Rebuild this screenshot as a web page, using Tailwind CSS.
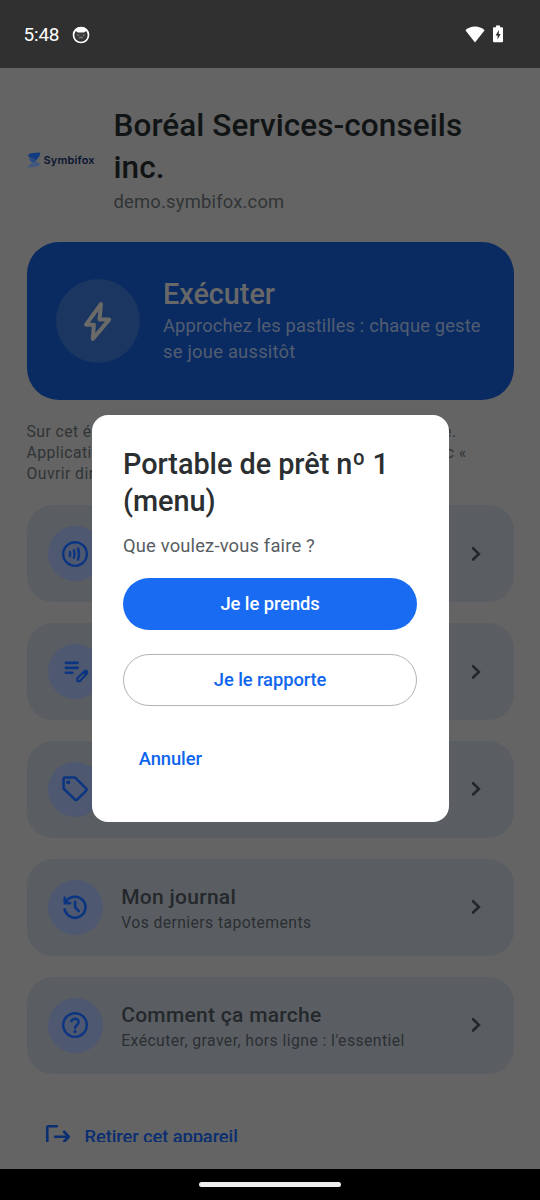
<!DOCTYPE html>
<html lang="fr">
<head>
<meta charset="utf-8">
<title>Symbifox</title>
<script src="https://cdn.jsdelivr.net/npm/@tailwindcss/browser@4"></script>
</head>
<body class="w-[540px] h-[1200px] overflow-hidden relative bg-[#646464] font-[Roboto,sans-serif] flex flex-col">
<header class="h-[68px] shrink-0 bg-[#303030] flex items-center text-white pl-[23.500px] pr-9">
  <span class="text-[19px] leading-6 tracking-[-0.200px] mt-[2px]">5:48</span>
  <svg class="ml-[13px] mt-px" width="18" height="18" viewBox="0 0 18 18"><circle cx="9" cy="9" r="7.5" fill="none" stroke="#fff" stroke-width="1.700"/><path d="M1.800 6.200Q4 1 9 1t7.200 5.200l-2.400-1-1.400 1.300H5.600L4.200 5.200z" fill="#fff"/><path d="M3.600 5.400l2.400 1.600h6l2.400-1.600v5.300Q13 14 9 14t-5.400-3.500z" fill="#3c3c3c"/><path d="M5.200 8.900l2 .6M12.800 8.900l-2 .6M7 12l2-1 2 1" stroke="#999" stroke-width=".8" fill="none"/></svg>
  <svg class="ml-auto" width="20" height="17" viewBox="0 0 20 17"><path d="M.4 4.200Q4.500 .6 10 .6t9.600 3.600L10 16.400z" fill="#fff"/></svg>
  <svg class="ml-[7px] -mt-px" width="12" height="18" viewBox="0 0 12 18"><path d="M4 .5h4v1.700h2q1 0 1 1v13q0 1-1 1H2q-1 0-1-1v-13q0-1 1-1h2z" fill="#fff"/><path d="M6.800 5L3.600 10.400h2V14.500L8.600 9h-1.800z" fill="#303030"/></svg>
</header>

<main class="flex flex-col px-[26.500px] pt-[37.300px] h-[1074px] shrink-0 overflow-hidden">
  <section class="flex items-center gap-[18px]">
    <div class="w-[69px] flex items-center gap-[3px]">
      <svg width="14" height="17" viewBox="0 0 14 17"><path d="M13.300 .5Q4 .6 1.800 2.200.2 5 3.600 5.800q3.500.6 5.200 2.600Q12.900 5 13.300.5z" fill="#123b80"/><path d="M1.800 6.200q6 .4 7.400 3.300L6 10.400Q2.400 9 1.800 6.200z" fill="#234a86"/><path d="M.3 16.200Q3 11.200 8 9.400q4 .6 5.200 3-1.200 2.200-5 2.300-4.200-.2-7.900 1.500z" fill="#41587f"/></svg>
      <span class="text-[11px] leading-4 font-semibold font-[Inter,sans-serif] tracking-[0.160px] text-[#0a1430] -mt-px">Symbifox</span>
    </div>
    <div>
      <h1 class="text-[31.500px] leading-[42px] tracking-[0.080px] font-medium text-[#111414]">Boréal Services-conseils<br>inc.</h1>
      <p class="text-[18.375px] leading-[26.250px] tracking-[0.210px] text-[#303436]">demo.symbifox.com</p>
    </div>
  </section>

  <section class="mt-[26.200px] h-[158px] shrink-0 rounded-[32px] bg-[#0a2b62] flex items-center pl-[29px] gap-[23.500px]">
    <div class="size-[84px] shrink-0 rounded-full bg-[#1b3661] flex items-center justify-center">
      <svg width="84" height="84" viewBox="0 0 84 84" fill="none" stroke="#6a6a68" stroke-width="4" stroke-linejoin="round"><path d="M45 25L30 45.700H37.900L36.800 60L53.200 40.600H43.500z"/></svg>
    </div>
    <div class="pt-[0.600px]">
      <h2 class="text-[28.875px] leading-[36.750px] tracking-[-0.050px] font-medium text-[#686868]">Exécuter</h2>
      <p class="text-[18.375px] leading-[26.250px] tracking-[0.145px] text-[#525d70]">Approchez les pastilles : chaque geste<br><span class="tracking-[0.230px]">se joue aussitôt</span></p>
    </div>
  </section>

  <section class="mt-[21px] text-[15.750px] leading-[21px] tracking-[0.430px] text-[#303436]">
    <div class="flex justify-between w-[430px]"><span>Sur cet écran</span><span>allumée.</span></div>
    <div class="flex justify-between w-[440px]"><span>Application</span><span>avec «</span></div>
    <div>Ouvrir directement ».</div>
  </section>

  <section class="mt-[21.200px] flex flex-col gap-[21.300px]">
    <div class="h-[96.700px] shrink-0 rounded-[26px] bg-[#5a5e63] flex items-center justify-between px-[21px]">
      <div class="size-[55px] rounded-full bg-[#4e5870] flex items-center justify-center">
        <svg width="31.500" height="31.500" viewBox="0 0 24 24" fill="none" stroke="#0b3580" stroke-width="1.800" stroke-linecap="round"><circle cx="12.200" cy="12.200" r="9"/><path d="M8.300 10.600q.4 1.600 0 3.200M11.400 9.400q.9 2.800 0 5.600M14.500 8q1.500 4.200 0 8.400"/></svg>
      </div>
      <svg width="31.500" height="31.500" viewBox="0 0 24 24" fill="none" stroke="#24282b" stroke-width="2" stroke-linecap="round"><path d="M9.200 7.800L13.600 12.100L9.200 16.400"/></svg>
    </div>
    <div class="h-[96.700px] shrink-0 rounded-[26px] bg-[#5a5e63] flex items-center justify-between px-[21px]">
      <div class="size-[55px] rounded-full bg-[#4e5870] flex items-center justify-center">
        <svg width="31.500" height="31.500" viewBox="0 0 24 24" fill="none" stroke="#0b3580" stroke-width="2" stroke-linecap="round"><path d="M5.200 5.200h9M5.200 9h9M5.200 12.800h5"/><path d="M14 19.200v-2.200l5.500-5.500q.9-.7 1.700.1.800.8.100 1.700l-5.500 5.900z" stroke-width="1.600" stroke-linejoin="round"/><path d="M18 13l1.700 1.700 1.800-1.700-1.800-1.700z" fill="#0b3580" stroke="none"/></svg>
      </div>
      <svg width="31.500" height="31.500" viewBox="0 0 24 24" fill="none" stroke="#24282b" stroke-width="2" stroke-linecap="round"><path d="M9.200 7.800L13.600 12.100L9.200 16.400"/></svg>
    </div>
    <div class="h-[96.700px] shrink-0 rounded-[26px] bg-[#5a5e63] flex items-center justify-between px-[21px]">
      <div class="size-[55px] rounded-full bg-[#4e5870] flex items-center justify-center">
        <svg width="31.500" height="31.500" viewBox="0 0 24 24" fill="none" stroke="#0b3580" stroke-width="1.900" stroke-linejoin="round"><path d="M3.500 4.400q0-1 1-1h7.200q.5 0 .8.300l8.400 8.400q.6.600 0 1.200L13.700 20.500q-.6.600-1.200 0L3.800 12.200Q3.500 11.900 3.500 11.400z"/><circle cx="7" cy="7" r="1.500" fill="#0b3580" stroke="none"/></svg>
      </div>
      <svg width="31.500" height="31.500" viewBox="0 0 24 24" fill="none" stroke="#24282b" stroke-width="2" stroke-linecap="round"><path d="M9.200 7.800L13.600 12.100L9.200 16.400"/></svg>
    </div>
    <div class="h-[96.700px] shrink-0 rounded-[26px] bg-[#5a5e63] flex items-center px-[21px]">
      <div class="size-[55px] rounded-full bg-[#4e5870] flex items-center justify-center">
        <svg width="31.500" height="31.500" viewBox="0 0 24 24" fill="none" stroke="#0b3580" stroke-width="2" stroke-linecap="round" stroke-linejoin="round"><path d="M4.300 13.900A8 8 0 1 0 5.400 8.100M4.400 5.100V9.200H8.500"/><path d="M12.300 8.200v4.300l2.800 2.800"/></svg>
      </div>
      <div class="ml-[18.700px] pt-[1px] grow">
        <h3 class="text-[21px] leading-[31.500px] tracking-[0.280px] font-medium text-[#24282b]">Mon journal</h3>
        <p class="-mt-px text-[15.750px] leading-[21px] tracking-[0.400px] text-[#2b2f32]">Vos derniers tapotements</p>
      </div>
      <svg width="31.500" height="31.500" viewBox="0 0 24 24" fill="none" stroke="#24282b" stroke-width="2" stroke-linecap="round"><path d="M9.200 7.800L13.600 12.100L9.200 16.400"/></svg>
    </div>
    <div class="h-[96.700px] shrink-0 rounded-[26px] bg-[#5a5e63] flex items-center px-[21px]">
      <div class="size-[55px] rounded-full bg-[#4e5870] flex items-center justify-center">
        <svg width="31.500" height="31.500" viewBox="0 0 24 24" fill="none" stroke="#0b3580" stroke-width="1.800" stroke-linecap="round"><circle cx="12.200" cy="12.200" r="9"/><path d="M9.500 9.300Q10.200 7.400 12.300 7.400q2.600.1 2.700 2.400 0 1.200-1.400 2.400-1.300 1.100-1.300 2.200"/><circle cx="12.200" cy="17.200" r="1.200" fill="#0b3580" stroke="none"/></svg>
      </div>
      <div class="ml-[18.700px] pt-[1px] grow">
        <h3 class="text-[21px] leading-[31.500px] tracking-[0.280px] font-medium text-[#24282b]">Comment ça marche</h3>
        <p class="-mt-px text-[15.750px] leading-[21px] tracking-[0.430px] text-[#2b2f32]">Exécuter, graver, hors ligne : l'essentiel</p>
      </div>
      <svg width="31.500" height="31.500" viewBox="0 0 24 24" fill="none" stroke="#24282b" stroke-width="2" stroke-linecap="round"><path d="M9.200 7.800L13.600 12.100L9.200 16.400"/></svg>
    </div>
  </section>

  <div class="mt-[47.500px] ml-[15.500px] flex items-center gap-[11px] text-[#0b2f70] shrink-0">
    <svg width="31.500" height="31.500" viewBox="0 0 24 24" fill="none" stroke="#0b2f70" stroke-width="2" stroke-linecap="round" stroke-linejoin="round"><path d="M11.300 4H5q-1 0-1 1v14q0 1 1 1h6.300M10 12h10M16.800 8.200L20.400 12L16.800 15.800"/></svg>
    <span class="text-[18.375px] leading-[26px] tracking-[-0.110px] font-medium">Retirer cet appareil</span>
  </div>
</main>

<footer class="mt-auto h-[31.500px] shrink-0 bg-black flex justify-center">
  <div class="mt-[13px] w-[142px] h-[5.500px] rounded-full bg-[#eeeeee]"></div>
</footer>

<div class="absolute left-[91.500px] top-[414.500px] w-[357.200px] h-[407.500px] rounded-[16px] bg-white px-[31.500px] pt-[31.500px] flex flex-col" role="dialog">
  <h2 class="text-[28.875px] leading-[36.750px] tracking-[-0.050px] font-medium text-[#2b2f31]">Portable de prêt nº 1<br>(menu)</h2>
  <p class="mt-[13.500px] text-[18.375px] leading-[26.250px] tracking-[0.170px] text-[#575d61]">Que voulez-vous faire ?</p>
  <button class="mt-[18.500px] h-[52.500px] shrink-0 rounded-full bg-[#196cf2] text-white text-[18.375px] tracking-[-0.080px] font-medium">Je le prends</button>
  <button class="mt-[23.600px] h-[52.500px] shrink-0 rounded-full border-[1.300px] border-[#b0b5b8] text-[#0f66ee] text-[18.375px] tracking-[-0.080px] font-medium">Je le rapporte</button>
  <button class="mt-[26px] h-[52.500px] shrink-0 self-start px-[15.750px] text-[#0f66ee] text-[18.375px] tracking-[-0.080px] font-medium pt-px">Annuler</button>
</div>
</body>
</html>
